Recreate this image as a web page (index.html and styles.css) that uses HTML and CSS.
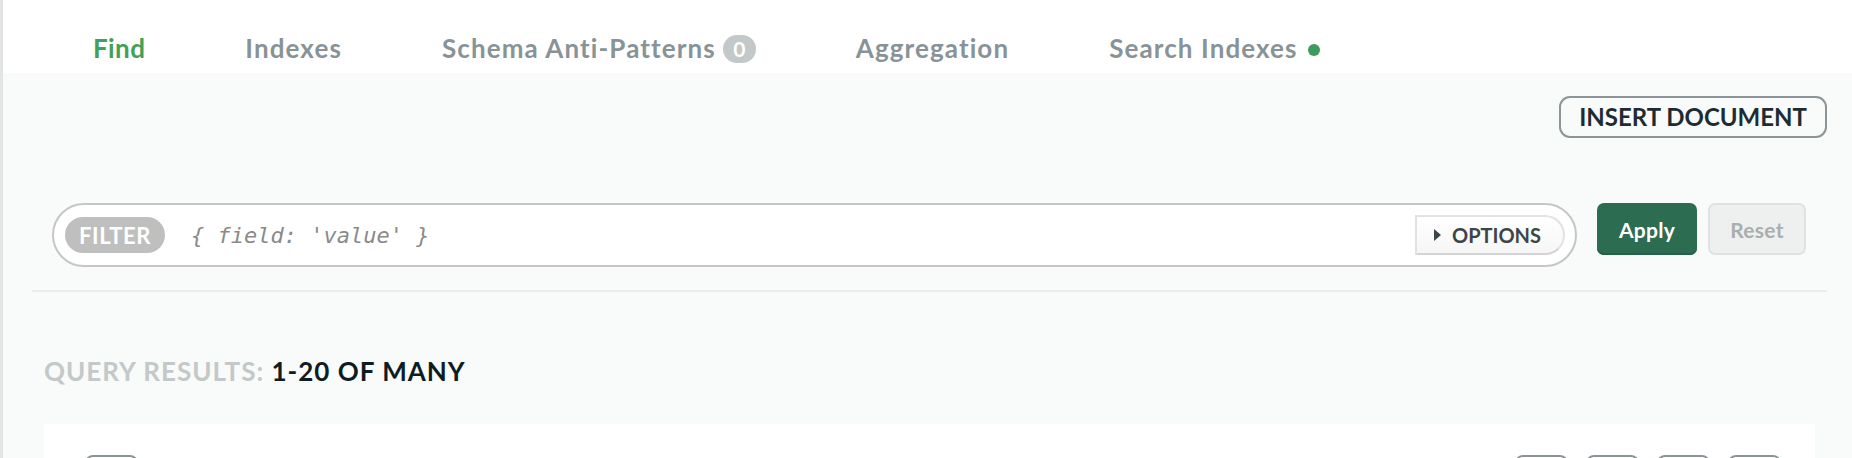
FILE: index.html
```html
<!DOCTYPE html>
<html lang="en">
<head>
<meta charset="utf-8">
<title>Documents</title>
<link rel="stylesheet" href="styles.css">
</head>
<body>
<div class="app">
  <nav class="tabs">
    <div class="tab active">Find</div>
    <div class="tab">Indexes</div>
    <div class="tab">Schema Anti-Patterns <span class="badge">0</span></div>
    <div class="tab">Aggregation</div>
    <div class="tab">Search Indexes <span class="dot"></span></div>
  </nav>
  <main class="content">
    <div class="actions">
      <button class="insert">INSERT DOCUMENT</button>
    </div>
    <div class="query-row">
      <div class="filter-bar">
        <span class="filter-label">FILTER</span>
        <span class="placeholder">{ field: 'value' }</span>
        <button class="options">
          <svg class="caret" width="9" height="14" viewBox="0 0 9 14"><path d="M1 1 L8 7 L1 13 Z" fill="#3d4548"/></svg>
          OPTIONS
        </button>
      </div>
      <button class="apply">Apply</button>
      <button class="reset">Reset</button>
    </div>
    <div class="sep"></div>
    <div class="results-title"><span class="muted">QUERY RESULTS:</span> 1-20 OF MANY</div>
    <div class="card">
      <div class="card-tools">
        <span class="tool"></span>
        <div class="tool-group">
          <span class="tool"></span>
          <span class="tool"></span>
          <span class="tool"></span>
          <span class="tool"></span>
        </div>
      </div>
    </div>
  </main>
</div>
</body>
</html>
```

FILE: styles.css
```css
* { box-sizing: border-box; }
html, body { margin: 0; padding: 0; }
body {
  background: #f9fbfa;
  font-family: Lato, "Liberation Sans", sans-serif;
  overflow: hidden;
}
.app {
  border-left: 3px solid #e3e5e5;
  height: 458px;
  display: flex;
  flex-direction: column;
  overflow: hidden;
}
.tabs {
  height: 73px;
  background: #ffffff;
  display: flex;
  padding-left: 90px;
  gap: 100px;
  flex: none;
}
.tab {
  padding-top: 33px;
  font-size: 26px;
  font-weight: 700;
  line-height: 30px;
  letter-spacing: 1.1px;
  color: #889397;
  display: flex;
  align-items: flex-start;
  white-space: nowrap;
}
.tab.active { color: #43a157; letter-spacing: 0.4px; }
.badge {
  display: inline-flex;
  align-items: center;
  justify-content: center;
  width: 33px;
  height: 28px;
  margin-left: 7px;
  margin-top: 2px;
  border-radius: 14px;
  background: #c3c8c8;
  color: #ffffff;
  font-size: 21px;
  font-weight: 700;
  letter-spacing: 0;
}
.dot {
  width: 12px;
  height: 12px;
  border-radius: 50%;
  background: #3d9c5a;
  margin-left: 10px;
  margin-top: 11px;
}
.content {
  flex: 1;
  min-height: 0;
  padding: 23px 25px 0 29px;
  display: flex;
  flex-direction: column;
}
.actions {
  display: flex;
  justify-content: flex-end;
}
.insert {
  height: 42px;
  padding: 0 18px;
  border: 2px solid #8c9497;
  border-radius: 11px;
  background: transparent;
  font-family: Lato, sans-serif;
  font-size: 24px;
  font-weight: 700;
  color: #1f2b33;
  line-height: 1;
}
.query-row {
  margin-top: 65px;
  padding: 0 21px 0 20px;
  display: flex;
  align-items: flex-start;
}
.filter-bar {
  flex: 1;
  height: 64px;
  border: 2px solid #c6c6c6;
  border-radius: 32px;
  background: #ffffff;
  display: flex;
  align-items: center;
  padding-left: 11px;
  padding-right: 10px;
}
.filter-label {
  height: 36px;
  padding: 0 14px;
  border-radius: 18px;
  background: #bfbfbf;
  color: #ffffff;
  font-size: 22px;
  font-weight: 700;
  letter-spacing: 0.6px;
  display: flex;
  align-items: center;
}
.placeholder {
  margin-left: 26px;
  font-family: "DejaVu Sans Mono", monospace;
  font-style: italic;
  font-size: 22px;
  color: #8a8a8a;
}
.options {
  margin-left: auto;
  height: 40px;
  width: 150px;
  border: 2px solid #e2e2e2;
  border-bottom-color: #d4d4d4;
  border-radius: 0 20px 20px 0;
  background: linear-gradient(#ffffff, #f6f6f6);
  display: flex;
  align-items: center;
  justify-content: center;
  gap: 10px;
  font-family: Lato, sans-serif;
  font-size: 20px;
  font-weight: 700;
  color: #3d4548;
  padding: 0 12px 0 6px;
}
.caret { flex: none; }
.apply {
  margin-left: 20px;
  height: 52px;
  width: 100px;
  border: none;
  border-radius: 7px;
  background: #2c6c51;
  box-shadow: inset 0 -2px 0 #25604a;
  color: #ffffff;
  font-family: Lato, sans-serif;
  font-size: 21px;
  font-weight: 700;
  letter-spacing: 0.3px;
}
.reset {
  margin-left: 11px;
  height: 52px;
  width: 98px;
  border: 2px solid #dfe2e2;
  border-radius: 7px;
  background: #eef0f0;
  color: #a9aeae;
  font-family: Lato, sans-serif;
  font-size: 21px;
  font-weight: 700;
  letter-spacing: 0.3px;
}
.sep {
  margin-top: 23px;
  height: 2px;
  background: #e8ecec;
}
.results-title {
  margin-top: 64px;
  margin-left: 12px;
  font-size: 26px;
  font-weight: 700;
  line-height: 30px;
  letter-spacing: 1px;
  color: #0e1d24;
}
.results-title .muted { color: #c3c8c8; }
.card {
  margin: 38px 12px 0 12px;
  flex: 1;
  min-height: 0;
  overflow: hidden;
  background: #ffffff;
}
.card-tools {
  padding: 31px 34px 0 41px;
  display: flex;
  justify-content: space-between;
}
.tool-group {
  display: flex;
  gap: 18px;
}
.tool {
  display: block;
  width: 53px;
  height: 30px;
  border: 2px solid #8c9497;
  border-radius: 8px;
}
```
